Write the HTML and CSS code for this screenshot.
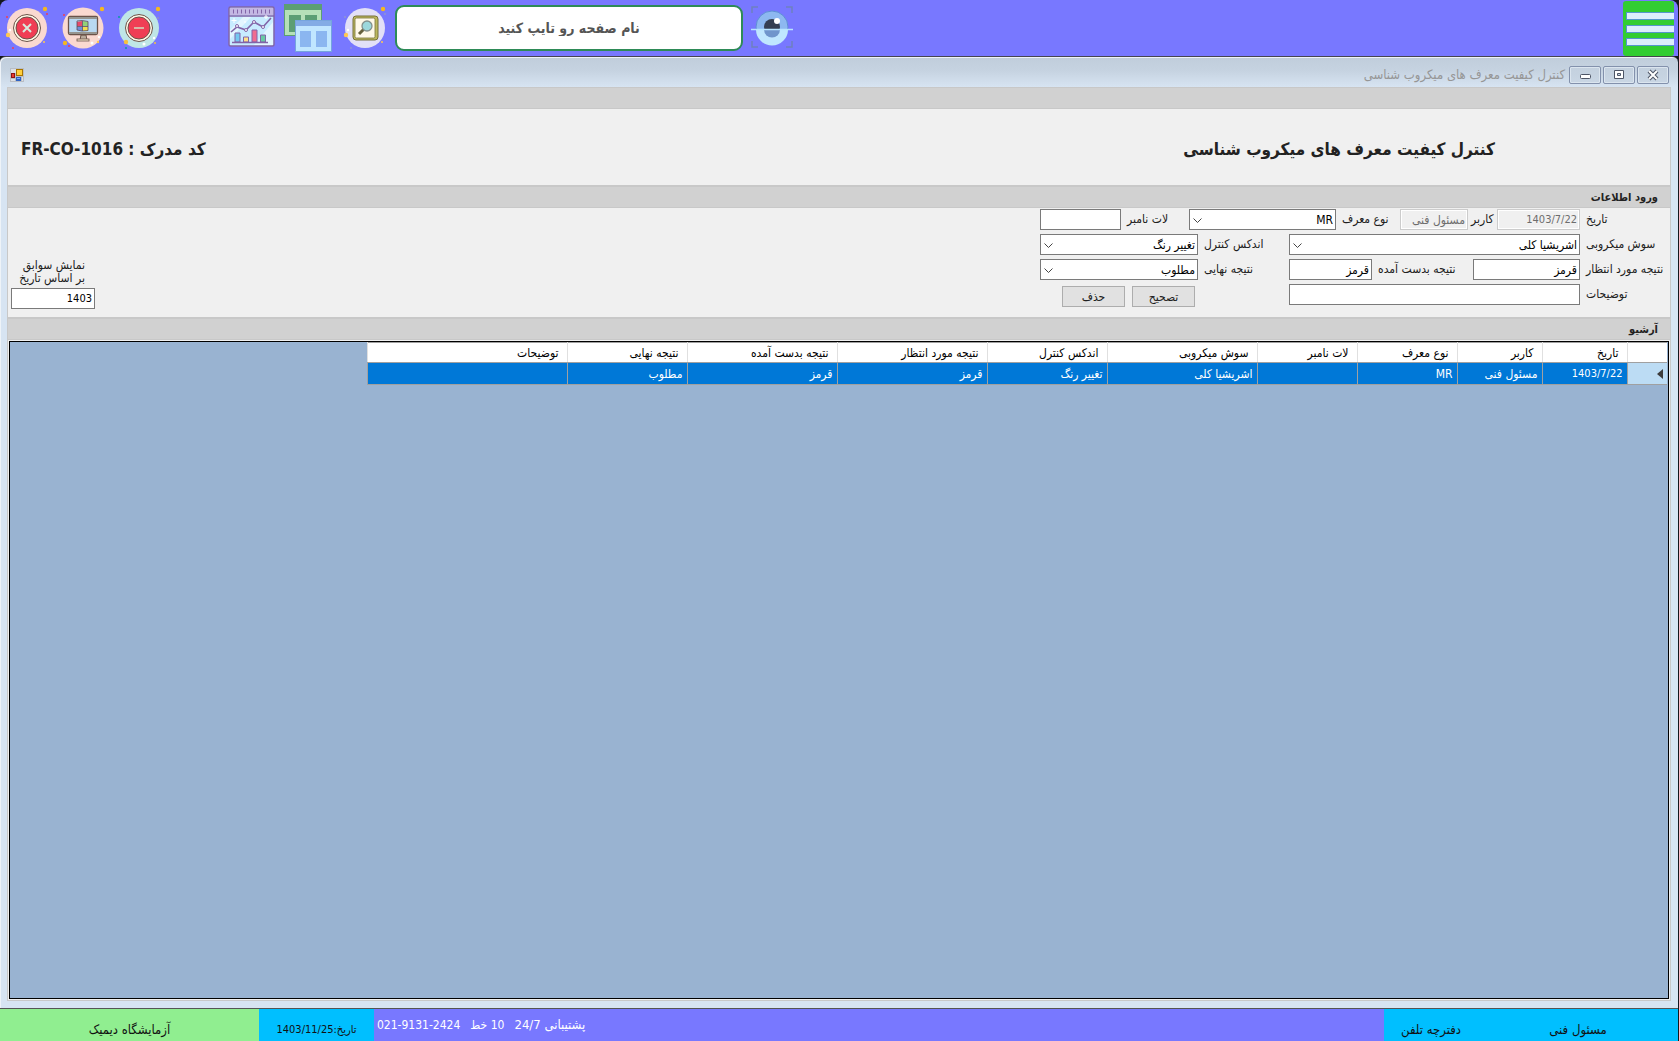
FILE: index.html
```html
<!DOCTYPE html>
<html lang="fa">
<head>
<meta charset="utf-8">
<title>کنترل کیفیت معرف های میکروب شناسی</title>
<link rel="stylesheet" href="styles.css">
</head>
<body>
<div class="app">
<header class="topbar">
  <button class="tool" aria-label="خروج">
    <svg width="48" height="48" viewBox="0 0 48 48">
      <circle cx="24" cy="24" r="20" fill="#fad9d0"/>
      <circle cx="24" cy="24" r="13.5" fill="#fff9e8" stroke="#6b5349" stroke-width="1"/>
      <circle cx="24" cy="24" r="11" fill="#f03e55" stroke="#6b5349" stroke-width="1"/>
      <path d="M20 20l8 8M28 20l-8 8" stroke="#d8eadf" stroke-width="2"/>
      <circle cx="42" cy="5" r="2.2" fill="#f5b820"/><circle cx="5" cy="31" r="2.2" fill="#ffc850"/><circle cx="41" cy="38" r="1" fill="#ffc850"/>
      <circle cx="4" cy="13" r="1" fill="#f03e55"/><circle cx="44" cy="10" r="1" fill="#f03e55"/><circle cx="10" cy="44" r="1" fill="#f03e55"/><circle cx="7" cy="26" r="1.2" fill="#fff"/>
    </svg>
  </button>
  <button class="tool" aria-label="نمایش دسکتاپ">
    <svg width="48" height="48" viewBox="0 0 48 48">
      <circle cx="24" cy="24" r="20.5" fill="#fad9d0"/>
      <path d="M22 31h5l1 5h-7z" fill="#b9aa9b" stroke="#6b5349"/>
      <rect x="18" y="35" width="12" height="2" fill="#f5e5c8" stroke="#6b5349" stroke-width=".8"/>
      <rect x="9.500" y="12.500" width="29" height="18" rx="1.500" fill="#b9d9f2" stroke="#6b5349" stroke-width="1.300"/>
      <path d="M10 13h28v2H10zM10 28h28v2H10z" fill="#96958f"/>
      <path d="M18 18l5-1v5h-5z" fill="#e84a6a"/><path d="M24 17l5 1v4h-5z" fill="#91d178"/>
      <path d="M18 23h5v4l-5-1z" fill="#7090d8"/><path d="M24 23h5v4h-5z" fill="#f2de50"/>
      <path d="M18 17l5-.5 6 1v9l-6 .5-5-1zM23.500 17v10M18 22.500h11" fill="none" stroke="#5d4a58" stroke-width=".8"/>
      <circle cx="43" cy="5" r="2.200" fill="#f5b820"/><circle cx="6" cy="39" r="2.200" fill="#f5b820"/><circle cx="39" cy="38" r="1.200" fill="#ffc850"/>
      <circle cx="5" cy="11" r="1" fill="#f03e55"/><circle cx="10" cy="42" r="1" fill="#f03e55"/><circle cx="33" cy="39" r="1.500" fill="#fff"/><circle cx="40" cy="33" r="1.200" fill="#fff"/>
    </svg>
  </button>
  <button class="tool" aria-label="کوچک کردن">
    <svg width="48" height="48" viewBox="0 0 48 48">
      <circle cx="24" cy="24" r="20" fill="#bfe6e6"/>
      <circle cx="24" cy="24" r="13.500" fill="#fff9e8" stroke="#6b5349" stroke-width="1"/>
      <circle cx="24" cy="24" r="11" fill="#f03e55" stroke="#6b5349" stroke-width="1"/>
      <rect x="19" y="23" width="10" height="2" fill="#d9b5a5"/>
      <circle cx="43" cy="5" r="2.200" fill="#f5b820"/><circle cx="11" cy="38" r="2.200" fill="#f5c040"/><circle cx="40" cy="39" r="1" fill="#f5c040"/>
      <circle cx="4" cy="13" r="1" fill="#0b9aa5"/><circle cx="11" cy="44" r="1" fill="#0b9aa5"/><circle cx="29" cy="40" r="1.500" fill="#fff"/><circle cx="39" cy="34" r="1.200" fill="#fff"/><circle cx="43" cy="14" r=".8" fill="#a0a0a8"/>
    </svg>
  </button>
  <button class="tool tool-chart" aria-label="نمودارها">
    <svg width="48" height="48" viewBox="0 0 48 48">
      <rect x="2" y="3" width="45" height="39" rx="1.500" fill="#c8ecff" stroke="#8265a8" stroke-width="1.500"/>
      <rect x="3" y="4" width="43" height="7" fill="#c3b7e3"/>
      <path d="M2 12h45" stroke="#8265a8" stroke-width="1.300"/>
      <path d="M6 7.500h37" stroke="#8265a8" stroke-width="4" stroke-dasharray="1 3"/>
      <path d="M27 41L46 18v23zM3 35V26L16 13h8z" fill="#e3f6ff"/>
      <path d="M8 29h5v9H8z" fill="#74c8f0" stroke="#8265a8"/><path d="M16.500 33h5v5h-5z" fill="#ffe08a" stroke="#8265a8"/>
      <path d="M25 26h5v12h-5z" fill="#ef6d90" stroke="#8265a8"/><path d="M33.500 31h5v7h-5z" fill="#68cba4" stroke="#8265a8"/>
      <path d="M5 38.500h36" stroke="#8265a8" stroke-width="1.300"/>
      <path d="M4 28l6-5 9 3 8-8 9 5 8-9" fill="none" stroke="#8265a8" stroke-width="1.600"/>
      <g fill="#fff" stroke="#8265a8"><circle cx="10" cy="22" r="1.500"/><circle cx="19" cy="26" r="1.500"/><circle cx="27" cy="18" r="1.500"/><circle cx="36" cy="23" r="1.500"/></g>
      <path d="M7 14v5M4.500 16.500h5M39 11v4M37 13h4M18 17v2" stroke="#fff"/>
    </svg>
  </button>
  <button class="tool" aria-label="پنجره ها">
    <svg width="50" height="50" viewBox="0 1 50 50">
      <path d="M1 1h38v32H1z" fill="#5c9e74"/><path d="M2 7h36v25H2z" fill="#b5e0b8"/>
      <path d="M6 12h12v17H6zM22 12h12v17H22z" fill="#5c9e74"/>
      <path d="M12 17h37v32H12z" fill="#76a4de"/><path d="M13 18h35v5H13z" fill="#83ace5"/><path d="M13 23h35v25H13z" fill="#c0e6ff"/>
      <path d="M17 28h11v16H17zM33 28h11v16H33z" fill="#8bb6f0"/>
    </svg>
  </button>
  <button class="tool tool-find" aria-label="جستجو">
    <svg width="48" height="48" viewBox="0 0 48 48">
      <circle cx="24" cy="24" r="20" fill="#e2e0f7"/>
      <rect x="12" y="12" width="25" height="24" rx="3" fill="#bcb85e" stroke="#77713a"/>
      <rect x="14" y="14" width="20" height="20" rx="1.500" fill="#fff9e8" stroke="#77713a" stroke-width=".8"/>
      <path d="M18 30l5-5" stroke="#66603c" stroke-width="3"/><circle cx="26" cy="22" r="5" fill="#9cd8dc" stroke="#84908c" stroke-width="1.300"/>
      <circle cx="42" cy="5" r="2.200" fill="#f5b820"/><circle cx="5" cy="31" r="2.200" fill="#ffc850"/><circle cx="41" cy="38" r="1" fill="#ffc850"/>
      <circle cx="7" cy="26" r="1.200" fill="#fff"/><circle cx="4" cy="13" r="1" fill="#8f94d0"/><circle cx="44" cy="10" r="1" fill="#8f94d0"/><circle cx="10" cy="44" r="1" fill="#8f94d0"/>
    </svg>
  </button>
  <input class="page-search" type="text" dir="rtl" placeholder="نام صفحه رو تایپ کنید" aria-label="نام صفحه">
  <button class="tool tool-eye" aria-label="نمایش">
    <svg width="44" height="44" viewBox="0 0 44 44">
      <path d="M2 8V2h6M36 2h6v6M42 36v6h-6M8 42H2v-6" fill="none" stroke="#6e80c0" stroke-width="1.500"/>
      <circle cx="22" cy="22" r="16" fill="#8db8f0" stroke="#5e8fd6"/>
      <path d="M6 24.500h32a16 16 0 0 1-32 0z" fill="#c0e6ff"/>
      <circle cx="22" cy="22" r="8" fill="#353f52"/><path d="M14 24.500h16a8 8 0 0 1-16 0z" fill="#7095cc"/>
      <circle cx="27" cy="16" r="3" fill="#fff"/><path d="M1 24.500h42" stroke="#b8e4ff" stroke-width="1.300"/>
    </svg>
  </button>
  <button class="menu" aria-label="منو"><span></span><span></span><span></span></button>
</header>

<main class="window" dir="rtl">
  <div class="titlebar">
    <button class="winbtn" aria-label="بستن"><svg width="14" height="12" viewBox="0 0 14 12"><path d="M3 2l8 8M11 2l-8 8" stroke="#4d5566" stroke-width="4"/><path d="M3 2l8 8M11 2l-8 8" stroke="#fff" stroke-width="2"/></svg></button>
    <button class="winbtn" aria-label="بزرگ کردن"><svg width="14" height="12" viewBox="0 0 14 12"><path d="M2.500 1.500h9v8h-9zM5.500 4.500h3v2h-3z" fill="#fff" fill-rule="evenodd" stroke="#4d5566"/></svg></button>
    <button class="winbtn" aria-label="کمینه"><svg width="14" height="12" viewBox="0 0 14 12"><rect x="2.500" y="5.500" width="10" height="4" rx="1" fill="#fff" stroke="#4d5566"/></svg></button>
    <span class="caption">کنترل کیفیت معرف های میکروب شناسی</span>
    <svg class="appicon" width="14" height="14" viewBox="0 0 14 14"><path d="M0 0h14v14H0z" fill="#b9bdc4"/><path d="M1 1h5v4H1zM1 11h4v2H1zM12 9h1v4h-1z" fill="#dce0e6"/><path d="M6 1h7v7H6z" fill="#a87500"/><path d="M7 2h5v5H7z" fill="#ffcf3c"/><path d="M1 5h4v5H1z" fill="#8c1414"/><path d="M2 6h2v3H2z" fill="#e83c32"/><path d="M6 9h5v4H6z" fill="#2e62c4"/><path d="M7 10h3v1H7z" fill="#7db0f4"/></svg>
  </div>
  <div class="client">
    <div class="strip"></div>
    <section class="heading">
      <h1>کنترل کیفیت معرف های میکروب شناسی</h1>
      <p class="doc-code">کد مدرک : FR-CO-1016</p>
    </section>
    <h2 class="strip strip-top">ورود اطلاعات</h2>
    <form class="entry">
      <div class="fields">
        <div class="row">
          <label class="w90" for="date">تاریخ</label><input class="w83 num" id="date" value="1403/7/22" disabled>
          <label class="w29 tight" for="user">کاربر</label><input class="w68" id="user" value="مسئول فنی" disabled>
          <label class="w64" for="kind">نوع معرف</label><select class="w147" id="kind"><option>MR</option></select>
          <label class="w68" for="lot">لات نامبر</label><input class="w81" id="lot">
        </div>
        <div class="row">
          <label class="w90" for="strain">سوش میکروبی</label><select class="w291" id="strain"><option>اشریشیا کلی</option></select>
          <label class="w91" for="index">اندکس کنترل</label><select class="w158" id="index"><option>تغییر رنگ</option></select>
        </div>
        <div class="row">
          <label class="w90" for="expected">نتیجه مورد انتظار</label><input class="w107" id="expected" value="قرمز">
          <label class="w101" for="got">نتیجه بدست آمده</label><input class="w83" id="got" value="قرمز">
          <label class="w91" for="final">نتیجه نهایی</label><select class="w158" id="final"><option>مطلوب</option></select>
        </div>
        <div class="row">
          <label class="w90" for="notes">توضیحات</label><input class="w291" id="notes">
          <div class="actions"><button type="button">تصحیح</button><button type="button">حذف</button></div>
        </div>
      </div>
      <div class="history">
        <label for="year">نمایش سوابق<br>بر اساس تاریخ</label>
        <input class="num" id="year" value="1403">
      </div>
    </form>
    <h2 class="strip strip-top">آرشیو</h2>
    <div class="grid">
      <table>
        <colgroup><col class="c40"><col class="c85"><col class="c85"><col class="c100"><col class="c100"><col class="c150"><col class="c120"><col class="c150"><col class="c150"><col class="c120"><col class="c200"></colgroup>
        <thead><tr><th></th><th>تاریخ</th><th>کاربر</th><th>نوع معرف</th><th>لات نامبر</th><th>سوش میکروبی</th><th>اندکس کنترل</th><th>نتیجه مورد انتظار</th><th>نتیجه بدست آمده</th><th>نتیجه نهایی</th><th>توضیحات</th></tr></thead>
        <tbody><tr><td class="pick"><svg width="6" height="10" viewBox="0 0 6 10"><path d="M6 0v10L0 5z" fill="#3c3c3c"/></svg></td><td class="num">1403/7/22</td><td>مسئول فنی</td><td>MR</td><td></td><td>اشریشیا کلی</td><td>تغییر رنگ</td><td>قرمز</td><td>قرمز</td><td>مطلوب</td><td></td></tr></tbody>
      </table>
    </div>
  </div>
</main>

<footer class="status">
  <div class="lab" dir="rtl">آزمایشگاه دیمیک</div>
  <div class="today" dir="rtl">تاریخ:1403/11/25</div>
  <div class="support"><span>021-9131-2424</span><span dir="rtl">10 خط</span><span class="help" dir="rtl">پشتیبانی 24/7</span></div>
  <div class="phones" dir="rtl">دفترچه تلفن</div>
  <div class="who" dir="rtl">مسئول فنی</div>
</footer>
</div>
</body>
</html>
```
FILE: styles.css
```css
* { box-sizing: border-box; }
body { margin: 0; background: #14161c; font: 12px/14px "DejaVu Sans Condensed", "DejaVu Sans", sans-serif; color: #202020; }
h1, h2, p { margin: 0; }
button, input, select { font: inherit; color: inherit; border-radius: 0; margin: 0; }
svg { display: block; }
.app { display: flex; flex-direction: column; min-height: 100vh; margin-right: 1px; }

.topbar { display: flex; align-items: flex-start; height: 56px; padding: 4px 3px 0; background: #7878ff; border-radius: 8px 8px 0 0; }
.tool { border: 0; padding: 0; background: none; margin-right: 8px; }
.tool-chart { margin-left: 56px; }
.tool-find { margin-right: 6px; }
.page-search { width: 348px; height: 46px; margin-top: 1px; border: 2px solid #2e8b57; border-radius: 9px; background: #fff; text-align: center; font-size: 14px; font-weight: bold; outline: 0; }
.page-search::placeholder { color: #555; opacity: 1; }
.tool-eye { margin: 1px 0 0 7px; }
.menu { display: flex; flex-direction: column; justify-content: center; gap: 5px; width: 51px; height: 55px; margin: -3px 1px 0 auto; padding: 0 0 0 3px; border: 0; border-radius: 3px; background: #32cd32; }
.menu span { height: 8px; border: 1px solid #5596cc; border-right: 0; background: #dceefc; }

.window { flex: 1; display: flex; flex-direction: column; padding: 0 7px; background: linear-gradient(#c0cddb, #c6d3e1 14px, #d7e4f2 30px); border-top: 1px solid #454550; border-bottom: 1px solid #555; border-radius: 6px 6px 0 0; box-shadow: inset 1px 1px #eef3f8; }
.titlebar { display: flex; align-items: center; gap: 2px; height: 30px; padding: 6px 2px 0 3px; }
.winbtn { display: flex; align-items: center; justify-content: center; width: 32px; height: 18px; padding: 0; border: 1px solid #8391ac; border-radius: 2px; background: linear-gradient(#c3d0de, #c9d6e4); box-shadow: inset 0 0 0 1px #dbe5ef; }
.caption { margin-right: 2px; font-size: 13px; color: #969696; }
.appicon { margin-right: auto; }
.client { flex: 1; display: flex; flex-direction: column; margin-bottom: 7px; border: 1px solid #c8c8c8; background: #f0f0f0; }
.strip { height: 21px; padding: 4px 12px 0 0; background: #d1d1d1; border-bottom: 1px solid #c8c8c8; font-size: 11px; font-weight: bold; line-height: 14px; color: #222; }
.strip-top { height: 23px; border-top: 2px solid #c8c8c8; }
.heading { display: flex; align-items: center; justify-content: space-between; height: 76px; padding: 4px 175px 0 13px; }
.heading h1, .doc-code { font-size: 17px; line-height: 24px; font-weight: bold; color: #222; }

.entry { display: flex; justify-content: space-between; align-items: flex-end; height: 109px; padding: 0 0 8px 3px; }
.fields { display: flex; flex-direction: column; gap: 4px; align-self: flex-start; padding-top: 1px; }
.row { display: flex; }
.row label { padding: 3px 0 0 6px; text-align: left; white-space: nowrap; }
.row .tight { padding-left: 3px; }
.entry input, .entry select { height: 21px; padding: 0 2px; border: 1px solid #7a7a7a; background: #fff; color: #000; text-align: right; }
.entry input:disabled { border: 1px solid #ccc; background: #f0f0f0; box-shadow: inset 0 0 0 1px #fff; color: #6d6d6d; }
.entry select { appearance: none; background: #fff url("data:image/svg+xml,%3Csvg xmlns='http://www.w3.org/2000/svg' width='9' height='6'%3E%3Cpath d='M.5 .5l4 4 4-4' fill='none' stroke='%23444'/%3E%3C/svg%3E") no-repeat 3px 8px; }
.entry .num, td.num { font-size: 11px; }
.actions { display: flex; gap: 7px; margin-right: 94px; padding-top: 2px; }
.actions button { width: 63px; height: 21px; padding: 0; border: 1px solid #adadad; background: #e1e1e1; }
.history { display: flex; flex-direction: column; gap: 3px; width: 84px; }
.history label { padding-right: 10px; line-height: 13px; white-space: nowrap; }
.history input { width: 84px; }
.w29 { width: 29px; } .w64 { width: 64px; } .w68 { width: 68px; } .w81 { width: 81px; } .w83 { width: 83px; }
.w90 { width: 90px; } .w91 { width: 91px; } .w101 { width: 101px; } .w107 { width: 107px; }
.w147 { width: 147px; } .w158 { width: 158px; } .w291 { width: 291px; }

.grid { flex: 1; margin: 1px; border: 1px solid #000; background: #99b3d1; padding: 0 1px 0 0; }
table { table-layout: fixed; width: 1300px; border-collapse: collapse; color: #000; }
th { height: 20px; padding: 0 8px 0 0; background: #fff; border-left: 1px solid #e0e0e0; border-bottom: 1px solid #a0a0a0; border-top: 1px solid #a0a0a0; text-align: right; font-weight: normal; }
td { height: 22px; padding: 0 4px 0 0; background: #0078d7; border-left: 1px solid #a0a0a0; border-bottom: 1px solid #a0a0a0; color: #fff; }
td.pick { background: #bcdcf4; }
.c40 { width: 40px; } .c85 { width: 85px; } .c100 { width: 100px; } .c120 { width: 120px; } .c150 { width: 150px; } .c200 { width: 200px; }

.status { display: flex; height: 32px; background: #7878ff; font-size: 13px; line-height: 16px; color: #111; text-align: center; }
.status > div { padding-top: 13px; }
.lab { width: 259px; background: #90ee90; }
.today { width: 115px; background: #00bfff; font-size: 11px; }
.status .support { flex: 1; display: flex; gap: 10px; padding: 8px 0 0 3px; font-size: 12px; color: #fff; }
.support .help { font-size: 13px; }
.phones { width: 94px; background: #00bfff; }
.who { width: 200px; background: #00bfff; }
```
